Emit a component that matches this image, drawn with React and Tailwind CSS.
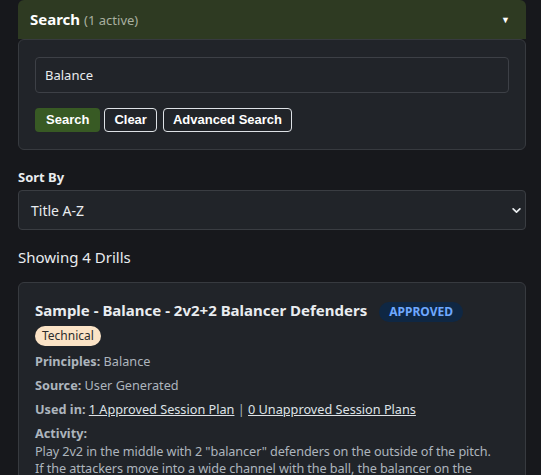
import React from 'react';

const App = () => {
  return (
    <div className="min-h-screen bg-[#17181c] pl-[18px] pr-[15px] text-[#dee2e6] font-['Noto_Sans',sans-serif]">
      {/* search accordion */}
      <div className="h-[39px] rounded-t-md bg-[#2e3a22] flex items-center justify-between pl-3 pr-4">
        <div className="flex items-baseline gap-1">
          <span className="text-[15px] font-bold text-white">Search</span>
          <span className="text-[13px] text-[#a9b0a0]">(1 active)</span>
        </div>
        <span className="text-[9px] text-white">▼</span>
      </div>
      <div className="rounded-md border border-[#373a3f] bg-[#212429] px-4 pt-[17px] pb-[17px]">
        <input
          type="text"
          defaultValue="Balance"
          className="w-full h-9 rounded border border-[#3d4046] bg-[#212429] px-[9px] text-[13px] text-[#e9ecef] outline-none"
        />
        <div className="flex gap-[4px] mt-[15px] font-['Liberation_Sans',sans-serif]">
          <button className="h-6 px-[11px] rounded bg-[#385a24] text-white text-[13px] font-bold">
            Search
          </button>
          <button className="h-6 px-[9px] rounded border border-[#dee2e6] text-white text-[13px] font-bold">
            Clear
          </button>
          <button className="h-6 px-[9px] rounded border border-[#dee2e6] text-white text-[13px] font-bold ml-[2px]">
            Advanced Search
          </button>
        </div>
      </div>

      {/* sort */}
      <div className="mt-[18px] text-[13px] font-bold text-[#e9ecef] leading-[18px]">Sort By</div>
      <div className="mt-[4px] h-10 rounded border border-[#3a3d42] bg-[#212429] flex items-center justify-between pl-3 pr-[4px]">
        <span className="text-[14px] text-[#e9ecef]">Title A-Z</span>
        <svg width="9" height="9" viewBox="0 0 16 16">
          <path d="M2 5l6 6 6-6" fill="none" stroke="#e9ecef" strokeWidth="3" strokeLinecap="round" strokeLinejoin="round" />
        </svg>
      </div>

      <div className="mt-[16px] text-[15px] text-[#e9ecef] leading-[22px]">Showing 4 Drills</div>

      {/* drill card */}
      <div className="mt-[14px] rounded-md border border-[#373a3f] bg-[#212429] px-4 pt-[16px] pb-4">
        <div className="flex items-center">
          <span className="text-[15px] font-bold text-[#e9ecef]">Sample - Balance - 2v2+2 Balancer Defenders</span>
          <span className="ml-3 mt-[3px] h-5 px-[10px] rounded-full bg-[#0f2743] text-[#6ea8fe] text-[12px] font-bold flex items-center">
            APPROVED
          </span>
        </div>
        <div>
          <span className="inline-flex items-center h-5 px-[7px] rounded-full bg-[#fbe3c6] text-[#2b2b2b] text-[12px]">
            Technical
          </span>
        </div>
        <div className="mt-[3px] text-[12.7px] text-[#adb5bd] leading-6">
          <div><span className="font-bold">Principles:</span> Balance</div>
          <div><span className="font-bold">Source:</span> User Generated</div>
          <div>
            <span className="font-bold">Used in:</span>{' '}
            <a className="underline text-[#dee2e6]">1 Approved Session Plan</a>
            {' | '}
            <a className="underline text-[#dee2e6]">0 Unapproved Session Plans</a>
          </div>
          <div className="font-bold leading-[20px] mt-[2px]">Activity:</div>
          <p className="leading-[17px] tracking-[-0.1px] pr-[14px]">
            Play 2v2 in the middle with 2 "balancer" defenders on the outside of the pitch. If the attackers move into a wide channel with the ball, the balancer on the opposite side must drop in to provide cover.
          </p>
        </div>
      </div>
    </div>
  );
};

export default App;
